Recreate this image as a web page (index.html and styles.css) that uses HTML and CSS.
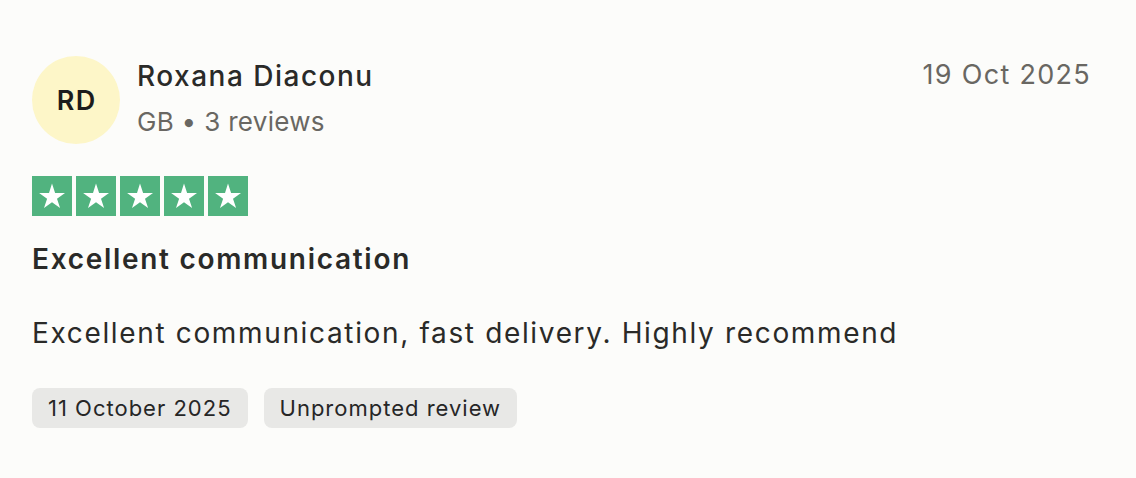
FILE: index.html
```html
<!DOCTYPE html>
<html>
<head>
<meta charset="utf-8">
<link rel="stylesheet" href="styles.css">
</head>
<body>
<article class="review">
  <header class="review-head">
    <div class="avatar">RD</div>
    <div class="who">
      <div class="name">Roxana Diaconu</div>
      <div class="meta">GB • 3 reviews</div>
    </div>
    <time class="posted">19 Oct 2025</time>
  </header>
  <div class="stars">
    <span class="star"><svg viewBox="0 0 40 40"><path d="M20 7.5l3.1 9.4h9.9l-8 5.8 3.1 9.4-8.1-5.8-8 5.8 3.1-9.4-8-5.8h9.9z" fill="#fff"/></svg></span>
    <span class="star"><svg viewBox="0 0 40 40"><path d="M20 7.5l3.1 9.4h9.9l-8 5.8 3.1 9.4-8.1-5.8-8 5.8 3.1-9.4-8-5.8h9.9z" fill="#fff"/></svg></span>
    <span class="star"><svg viewBox="0 0 40 40"><path d="M20 7.5l3.1 9.4h9.9l-8 5.8 3.1 9.4-8.1-5.8-8 5.8 3.1-9.4-8-5.8h9.9z" fill="#fff"/></svg></span>
    <span class="star"><svg viewBox="0 0 40 40"><path d="M20 7.5l3.1 9.4h9.9l-8 5.8 3.1 9.4-8.1-5.8-8 5.8 3.1-9.4-8-5.8h9.9z" fill="#fff"/></svg></span>
    <span class="star"><svg viewBox="0 0 40 40"><path d="M20 7.5l3.1 9.4h9.9l-8 5.8 3.1 9.4-8.1-5.8-8 5.8 3.1-9.4-8-5.8h9.9z" fill="#fff"/></svg></span>
  </div>
  <h2 class="title">Excellent communication</h2>
  <p class="body">Excellent communication, fast delivery. Highly recommend</p>
  <div class="chips">
    <span class="chip">11 October 2025</span>
    <span class="chip">Unprompted review</span>
  </div>
</article>
</body>
</html>
```
FILE: styles.css
```css
html, body {
  margin: 0;
  padding: 0;
  background: #fcfcfa;
}
body {
  font-family: Inter, "Noto Sans", sans-serif;
  color: #2a2a28;
}
.review {
  padding: 56px 46px 0 32px;
}
.review-head {
  display: flex;
  align-items: flex-start;
}
.avatar {
  width: 88px;
  height: 88px;
  border-radius: 50%;
  background: #fdf6c8;
  display: flex;
  align-items: center;
  justify-content: center;
  font-size: 27px;
  font-weight: 600;
  letter-spacing: 1.5px;
  text-indent: 1.5px;
  color: #1c1c1c;
  flex: none;
}
.who {
  margin-left: 17px;
  flex: 1;
}
.name {
  font-size: 28px;
  line-height: 36px;
  font-weight: 500;
  margin-top: 2px;
  letter-spacing: 1.5px;
}
.meta {
  font-size: 26px;
  line-height: 32px;
  color: #696762;
  margin-top: 12px;
  letter-spacing: 0.3px;
}
.posted {
  font-size: 27px;
  line-height: 36px;
  color: #696762;
  margin-top: 1px;
  margin-right: -1px;
  letter-spacing: 1.3px;
}
.stars {
  display: flex;
  gap: 4px;
  margin-top: 32px;
}
.star {
  width: 40px;
  height: 40px;
  background: #51b37f;
  display: block;
}
.star svg {
  display: block;
  width: 40px;
  height: 40px;
}
.title {
  margin: 25px 0 0;
  font-size: 28px;
  line-height: 36px;
  font-weight: 600;
  letter-spacing: 1.7px;
}
.body {
  margin: 38px 0 0;
  font-size: 28px;
  line-height: 36px;
  font-weight: 400;
  letter-spacing: 1.65px;
}
.chips {
  display: flex;
  gap: 16px;
  margin-top: 37px;
}
.chip {
  background: #e8e8e6;
  border-radius: 8px;
  height: 40px;
  padding: 0 16px;
  display: flex;
  align-items: center;
  font-size: 22px;
  color: #262626;
  letter-spacing: 1px;
}
```
